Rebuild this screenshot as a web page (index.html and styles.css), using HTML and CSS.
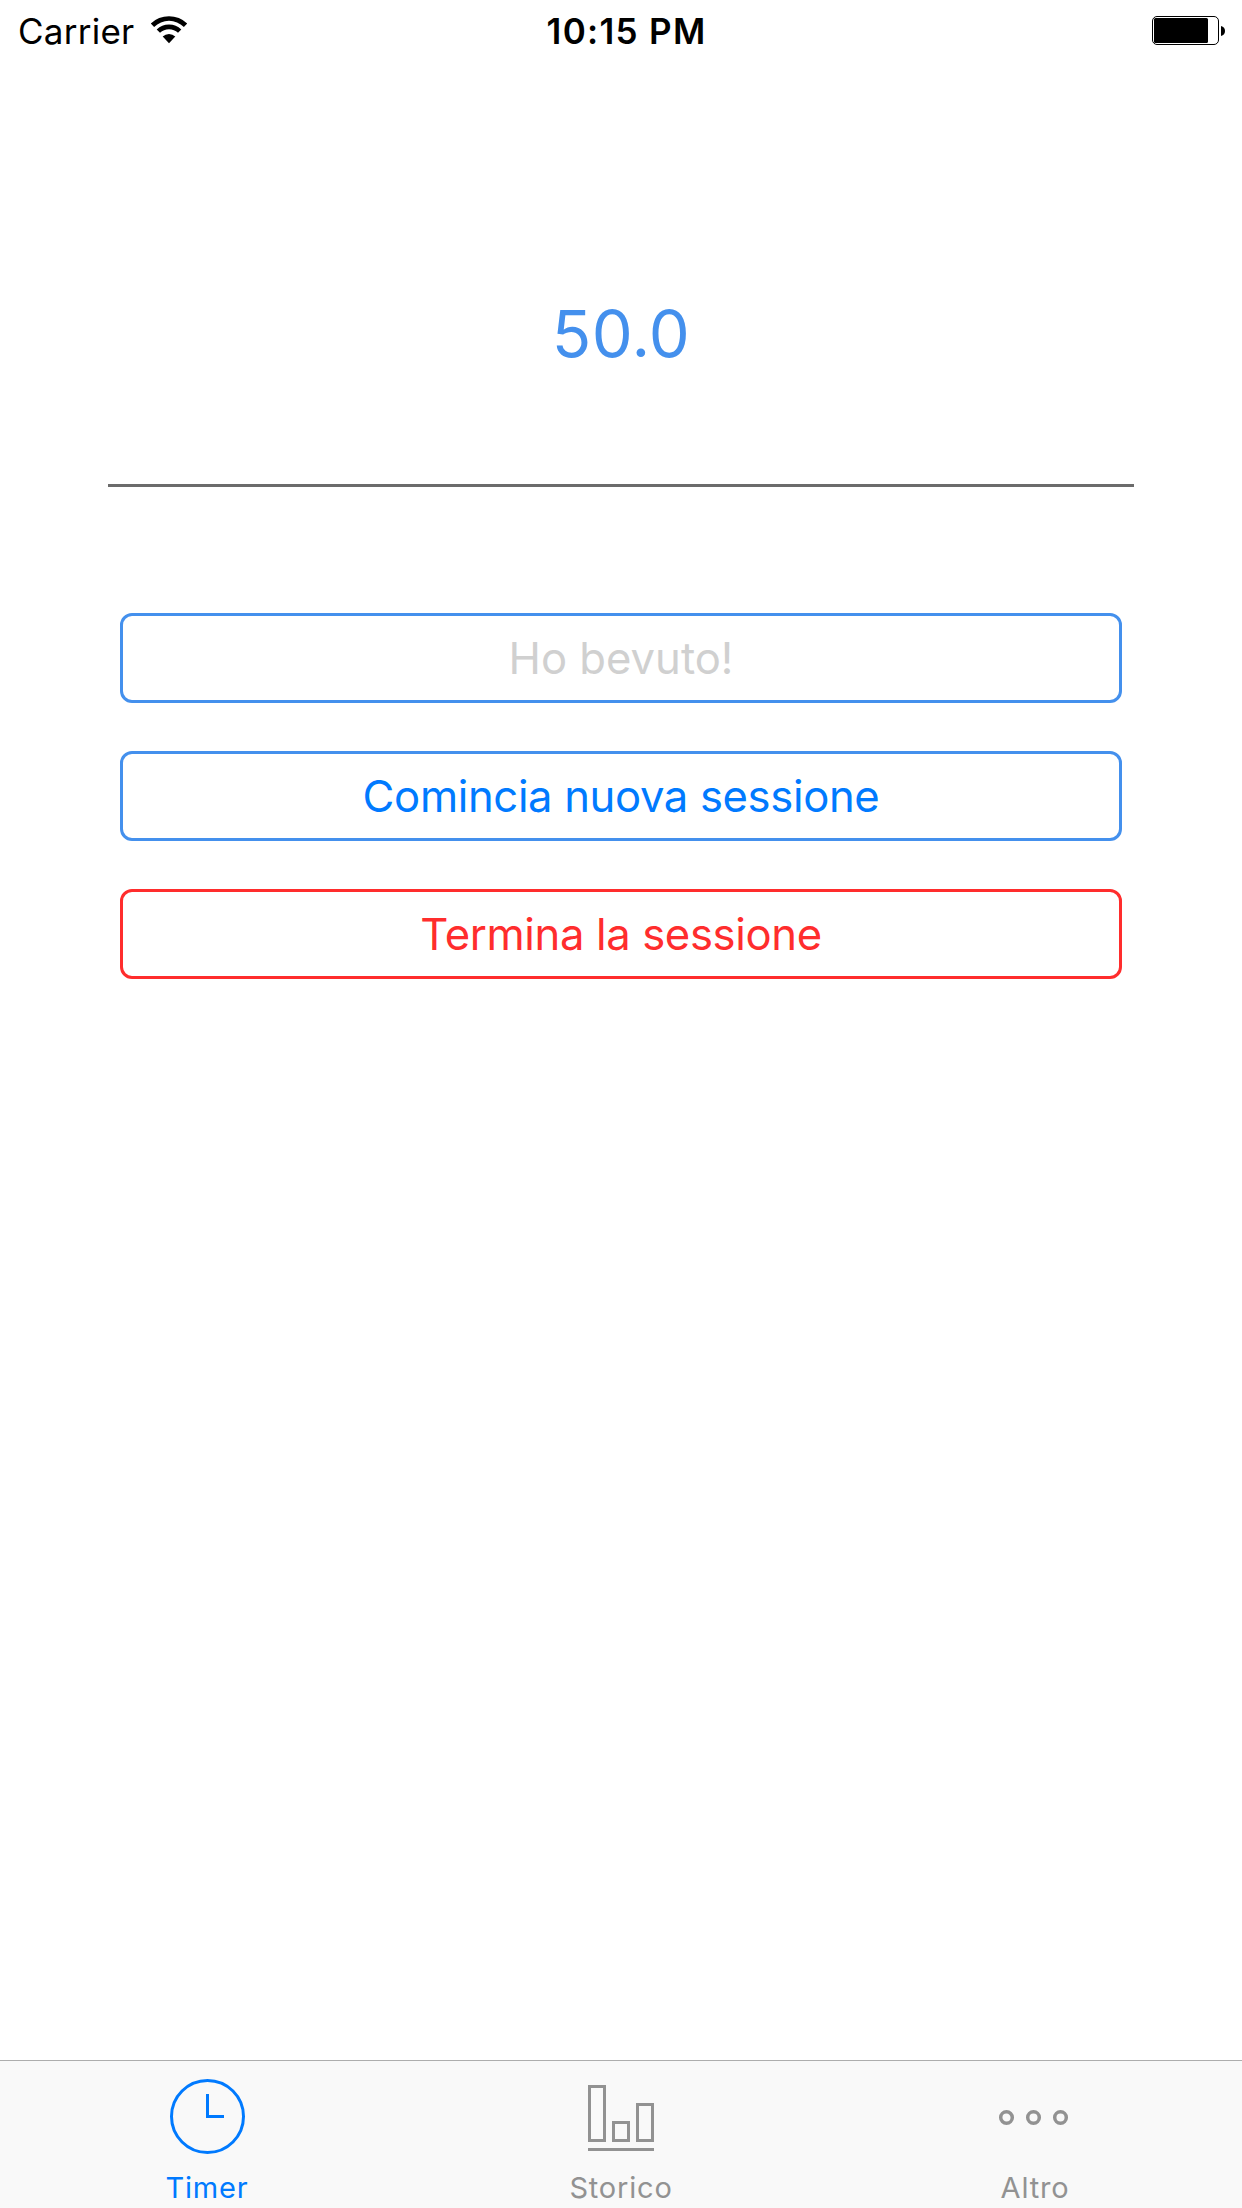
FILE: index.html
```html
<!DOCTYPE html>
<html lang="it">
<head>
<meta charset="utf-8">
<title>Timer</title>
<link rel="stylesheet" href="styles.css">
</head>
<body>
<div class="screen">
  <header class="status">
    <div class="status-left">
      <span class="carrier">Carrier</span>
      <svg class="wifi" width="38" height="28" viewBox="0 0 38 28">
        <path d="M0.8 7.6A26 26 0 0 1 37.2 7.6L33.9 10.9A21.3 21.3 0 0 0 4.1 10.9Z"/>
        <path d="M6.7 13.5A17.6 17.6 0 0 1 31.3 13.5L28 16.8A13 13 0 0 0 10 16.8Z"/>
        <path d="M12.7 20.6A9 9 0 0 1 25.3 20.6L19 27.2Z"/>
      </svg>
    </div>
    <span class="time">10:15 PM</span>
    <svg class="battery" width="74" height="30" viewBox="0 0 74 30">
      <rect x="0.5" y="0.5" width="66" height="28" rx="4.5" fill="none" stroke="#000"/>
      <rect x="2" y="2" width="54" height="25" rx="1.5"/>
      <path d="M69 10Q73 11.2 73 15T69 20Z"/>
    </svg>
  </header>
  <main class="content">
    <div class="amount">50.0</div>
    <hr class="divider">
    <div class="actions">
      <button class="btn btn-disabled" disabled>Ho bevuto!</button>
      <button class="btn">Comincia nuova sessione</button>
      <button class="btn btn-danger">Termina la sessione</button>
    </div>
  </main>
  <nav class="tabs">
    <a class="tab tab-active">
      <svg class="tab-icon" width="76" height="76" viewBox="0 0 76 76">
        <circle cx="38.5" cy="37.5" r="36"/>
        <path d="M38.5 15V37.5H55"/>
      </svg>
      <span>Timer</span>
    </a>
    <a class="tab">
      <svg class="tab-icon" width="76" height="76" viewBox="0 0 76 76">
        <path d="M6.5 7.5h15v54h-15zM30.5 43.5h15v18h-15zM54.5 25.5h15v36h-15zM5 70.5H71"/>
      </svg>
      <span>Storico</span>
    </a>
    <a class="tab">
      <svg class="tab-icon tab-icon-more" width="76" height="76" viewBox="0 0 76 76">
        <circle cx="9.5" cy="38.5" r="5.8"/>
        <circle cx="36.5" cy="38.5" r="5.8"/>
        <circle cx="63.5" cy="38.5" r="5.8"/>
      </svg>
      <span>Altro</span>
    </a>
  </nav>
</div>
</body>
</html>
```
FILE: styles.css
```css
* { box-sizing: border-box; }
body {
  margin: 0;
  background: #fff;
  font-family: Inter, "Liberation Sans", sans-serif;
}
.screen {
  width: 1242px;
  height: 2208px;
  display: flex;
  flex-direction: column;
}
.status {
  height: 62px;
  padding: 0 16px 0 18px;
  display: grid;
  grid-template-columns: 1fr auto 1fr;
  font-size: 35px;
  line-height: 62px;
}
.status-left { display: flex; gap: 15.5px; }
.carrier { letter-spacing: 0.25px; }
.wifi { margin-top: 16px; }
.time { font-weight: 600; letter-spacing: 1.3px; margin-left: 9px; }
.battery { margin-top: 16px; justify-self: end; }
.content { flex: 1; padding: 232px 108px 0; }
.amount {
  height: 80px;
  line-height: 80px;
  font-size: 65px;
  text-align: center;
  letter-spacing: 0.4px;
  color: #4490ed;
}
.divider {
  height: 3px;
  margin: 110px 0 126px;
  border: 0;
  background: #6b6b6b;
}
.actions {
  padding: 0 12px;
  display: flex;
  flex-direction: column;
  gap: 48px;
}
.btn {
  height: 90px;
  padding: 2px 0 0;
  border: 3px solid #4490ed;
  border-radius: 12px;
  background: none;
  font-family: inherit;
  font-size: 43.6px;
  line-height: 82px;
  letter-spacing: -0.35px;
  color: #007aff;
}
.btn-disabled { color: #d0d0d0; letter-spacing: 0; }
.btn-danger { border-color: #ff2d2d; color: #ff2d2d; }
.tabs {
  height: 148px;
  border-top: 1px solid #adadad;
  background: #f9f9f9;
  display: flex;
  justify-content: center;
  gap: 36px;
}
.tab {
  width: 378px;
  padding-top: 18px;
  display: flex;
  flex-direction: column;
  align-items: center;
  font-size: 29px;
  line-height: 36px;
  letter-spacing: 0.8px;
  color: #929292;
}
.tab-active { color: #007aff; }
.tab-icon {
  display: block;
  margin-bottom: 15px;
  fill: none;
  stroke: currentColor;
  stroke-width: 3;
}
.tab-icon-more { stroke-width: 3.5; }
```
